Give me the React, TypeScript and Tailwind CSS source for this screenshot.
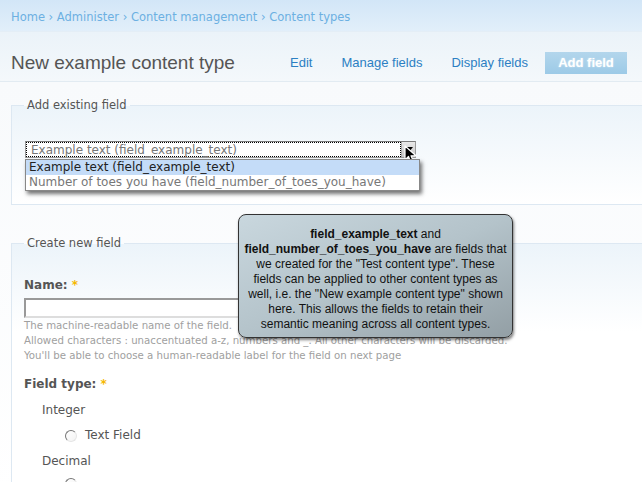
import React from "react";

const dv = "font-['DejaVu_Sans',Verdana,sans-serif]";
const ar = "font-['Liberation_Sans',Arial,sans-serif]";

function Cursor() {
  return (
    <svg
      className="absolute left-[404px] top-[145px]"
      width="14"
      height="20"
      viewBox="0 0 14 20"
    >
      <path
        d="M1 1 L1 15 L4.5 11.5 L7 17.5 L9.5 16.5 L7 10.8 L12 10.8 Z"
        fill="#000"
        stroke="#fff"
        strokeWidth="1.2"
        strokeLinejoin="round"
      />
    </svg>
  );
}

function Radio() {
  return (
    <span className="inline-block w-[12px] h-[12px] rounded-full border border-[#777] border-r-[#e5e5e5] border-b-[#e5e5e5] bg-gradient-to-br from-[#fff] to-[#f3f3f3]" />
  );
}

export default function App() {
  return (
    <div className={`w-[642px] h-[482px] overflow-hidden relative bg-white ${dv}`}>
      {/* breadcrumb */}
      <div className="h-[32px] px-[11px] pt-[5px] flex items-center bg-gradient-to-b from-[#d2e6f7] to-[#e2effa] border-b border-[#e4eef6] text-[11.5px] text-[#6cb0e2]">
        Home › Administer › Content management › Content types
      </div>

      {/* title + tabs */}
      <div className="h-[50px] pl-[11px] pr-[15px] pt-[12px] flex items-center bg-gradient-to-b from-[#ebf3f9] to-[#f4f8fb] border-b border-[#e2ebf2]">
        <h1 className={`${ar} text-[19px] text-[#555] pt-[1px]`}>New example content type</h1>
        <div className={`${ar} ml-auto flex items-center text-[13px] text-[#2c7fc3]`}>
          <span className="mr-[29px]">Edit</span>
          <span className="mr-[29px]">Manage fields</span>
          <span className="mr-[17px]">Display fields</span>
          <span className="w-[82px] h-[22px] flex items-center justify-center bg-gradient-to-b from-[#b3d6ec] to-[#9ccae7] text-white font-bold [text-shadow:0_0_2px_rgba(255,255,255,0.6)]">
            Add field
          </span>
        </div>
      </div>

      <div className="pl-[11px] pt-[15px] bg-gradient-to-b from-[#f8fafc] to-white">
        {/* Add existing field */}
        <fieldset className="border-t border-l border-b border-[#dde8f2] bg-gradient-to-b from-[#ecf4fa] to-white h-[108px] relative">
          <legend className="ml-[12px] px-[3px] text-[11.5px] text-[#555]">Add existing field</legend>
          <div className="relative ml-[13px] mt-[27px] w-[391px] h-[17px] bg-white border border-[#9a9a9a] border-t-[#7a7a7a] flex">
            <div className="flex-1 border border-dotted border-black flex items-center pl-[4px] text-[12px] text-[#777] leading-none">
              Example text (field_example_text)
            </div>
            <div className="w-[14px] bg-gradient-to-b from-[#e8e8e8] to-[#c8c8c8] border-l border-[#aaa] flex items-center justify-center">
              <span className="w-0 h-0 border-l-[4px] border-r-[4px] border-t-[5px] border-l-transparent border-r-transparent border-t-black" />
            </div>
            {/* open dropdown list */}
            <div className="absolute left-[-1px] top-[17px] w-[395px] bg-white border border-[#888] shadow-[2px_3px_4px_rgba(0,0,0,0.55)] text-[12px] z-10">
              <div className="h-[15px] leading-[15px] pl-[3px] bg-[#c4dcf8] text-[#222]">Example text (field_example_text)</div>
              <div className="h-[15px] leading-[15px] pl-[3px] text-[#777]">Number of toes you have (field_number_of_toes_you_have)</div>
            </div>
          </div>
        </fieldset>

        {/* Create new field */}
        <fieldset className="mt-[30px] border-t border-l border-[#dde8f2] bg-gradient-to-b from-[#ecf4fa] to-white to-[35%] h-[260px]">
          <legend className="ml-[12px] px-[3px] text-[11.5px] text-[#555]">Create new field</legend>
          <div className="pl-[12px] pt-[26px]">
            <div className="text-[12px] font-bold text-[#555] leading-[15px]">
              Name: <span className="text-[#f5b800]">*</span>
            </div>
            <div className="mt-[5px] w-[420px] h-[20px] bg-white border-2 border-[#999] border-r-[#ccc] border-b-[#ddd]" />
            <div className="text-[10.2px] leading-[15px] text-[#a0a0a0]">
              <div>The machine-readable name of the field.</div>
              <div>Allowed characters : unaccentuated a-z, numbers and _. All other characters will be discarded.</div>
              <div>You'll be able to choose a human-readable label for the field on next page</div>
            </div>
            <div className="mt-[14px] text-[12px] font-bold text-[#555] leading-[15px]">
              Field type: <span className="text-[#f5b800]">*</span>
            </div>
            <div className="pl-[18px] text-[12px] text-[#555]">
              <div className="mt-[11px] leading-[15px]">Integer</div>
              <div className="mt-[10px] pl-[23px] flex items-center gap-[8px] leading-[15px]">
                <Radio />
                <span>Text Field</span>
              </div>
              <div className="mt-[11px] leading-[15px]">Decimal</div>
              <div className="mt-[9px] pl-[23px] flex items-center">
                <Radio />
              </div>
            </div>
          </div>
        </fieldset>
      </div>

      {/* callout */}
      <div
        className={`absolute left-[238px] top-[214px] w-[275px] h-[124px] rounded-[8px] border border-[#333] bg-gradient-to-br from-[#c9d7de] via-[#b4c3ca] to-[#939fa5] shadow-[1px_2px_3px_rgba(0,0,0,0.5)] pt-[12px] text-center text-[12px] leading-[15px] text-[#111] ${ar}`}
      >
        <b>field_example_text</b> and
        <br />
        <b>field_number_of_toes_you_have</b> are fields that
        <br />
        we created for the "Test content type". These
        <br />
        fields can be applied to other content types as
        <br />
        well, i.e. the "New example content type" shown
        <br />
        here. This allows the fields to retain their
        <br />
        semantic meaning across all content types.
      </div>

      <Cursor />
    </div>
  );
}
